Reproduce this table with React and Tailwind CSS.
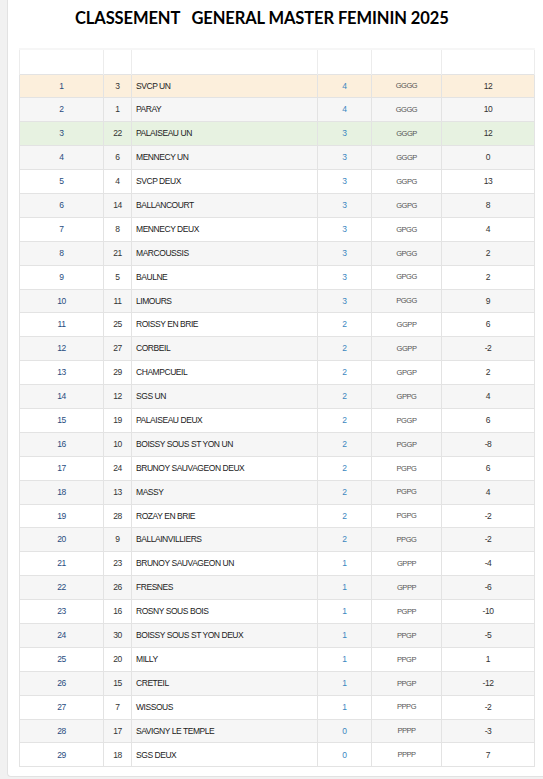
import React from "react";

const rows = [
  [1, 3, "SVCP UN", 4, "GGGG", 12],
  [2, 1, "PARAY", 4, "GGGG", 10],
  [3, 22, "PALAISEAU UN", 3, "GGGP", 12],
  [4, 6, "MENNECY UN", 3, "GGGP", 0],
  [5, 4, "SVCP DEUX", 3, "GGPG", 13],
  [6, 14, "BALLANCOURT", 3, "GGPG", 8],
  [7, 8, "MENNECY DEUX", 3, "GPGG", 4],
  [8, 21, "MARCOUSSIS", 3, "GPGG", 2],
  [9, 5, "BAULNE", 3, "GPGG", 2],
  [10, 11, "LIMOURS", 3, "PGGG", 9],
  [11, 25, "ROISSY EN BRIE", 2, "GGPP", 6],
  [12, 27, "CORBEIL", 2, "GGPP", -2],
  [13, 29, "CHAMPCUEIL", 2, "GPGP", 2],
  [14, 12, "SGS UN", 2, "GPPG", 4],
  [15, 19, "PALAISEAU DEUX", 2, "PGGP", 6],
  [16, 10, "BOISSY SOUS ST YON UN", 2, "PGGP", -8],
  [17, 24, "BRUNOY SAUVAGEON DEUX", 2, "PGPG", 6],
  [18, 13, "MASSY", 2, "PGPG", 4],
  [19, 28, "ROZAY EN BRIE", 2, "PGPG", -2],
  [20, 9, "BALLAINVILLIERS", 2, "PPGG", -2],
  [21, 23, "BRUNOY SAUVAGEON UN", 1, "GPPP", -4],
  [22, 26, "FRESNES", 1, "GPPP", -6],
  [23, 16, "ROSNY SOUS BOIS", 1, "PGPP", -10],
  [24, 30, "BOISSY SOUS ST YON DEUX", 1, "PPGP", -5],
  [25, 20, "MILLY", 1, "PPGP", 1],
  [26, 15, "CRETEIL", 1, "PPGP", -12],
  [27, 7, "WISSOUS", 1, "PPPG", -2],
  [28, 17, "SAVIGNY LE TEMPLE", 0, "PPPP", -3],
  [29, 18, "SGS DEUX", 0, "PPPP", 7],
];

const rowBg = (i) => {
  if (i === 0) return "bg-[#fcefdc]";
  if (i === 2) return "bg-[#e7f2e1]";
  return i % 2 === 1 ? "bg-[#f6f6f6]" : "bg-white";
};

export default function App() {
  return (
    <div className="w-[543px] h-[779px] overflow-hidden bg-[#f1f1f1] font-['Liberation_Sans',Arial,sans-serif]">
      <div className="ml-[7px] h-[777px] w-[560px] bg-white border-l border-b border-[#e2e2e2] rounded-bl">
        {/* Title */}
        <div className="h-[48px] pl-[67px] pt-[6px]">
          <h1 className="whitespace-pre font-['Lato',sans-serif] font-bold text-[16.5px] leading-[24px] text-black tracking-[-0.1px]">
            CLASSEMENT   GENERAL MASTER FEMININ 2025
          </h1>
        </div>

        {/* Table */}
        <table className="ml-[11px] w-[515px] table-fixed border-collapse border-t-2 border-[#f6f6f6] text-[8.5px] tracking-[-0.45px]">
          <colgroup>
            <col className="w-[84px]" />
            <col className="w-[28px]" />
            <col className="w-[186px]" />
            <col className="w-[54px]" />
            <col className="w-[70px]" />
            <col className="w-[93px]" />
          </colgroup>
          <thead>
            <tr className="h-[25px]">
              <th className="border-l border-r border-[#ececec]"></th>
              <th className="border-r border-[#ececec]"></th>
              <th className="border-r border-[#ececec]"></th>
              <th className="border-r border-[#ececec]"></th>
              <th className="border-r border-[#ececec]"></th>
              <th className="border-r border-[#ececec]"></th>
            </tr>
          </thead>
          <tbody>
            {rows.map((r, i) => (
              <tr key={r[0]} className={`h-[23.9px] ${rowBg(i)}`}>
                <td className="border border-[#e3e3e3] text-center text-[#284c7e]">{r[0]}</td>
                <td className="border border-[#e3e3e3] text-center text-[#333]">{r[1]}</td>
                <td className="border border-[#e3e3e3] pl-[4px] text-left text-[#222]">{r[2]}</td>
                <td className="border border-[#e3e3e3] text-center text-[#3b87bf]">{r[3]}</td>
                <td className="border border-[#e3e3e3] text-center text-[#555] text-[7.5px]">{r[4]}</td>
                <td className="border border-[#e3e3e3] text-center text-[#333]">{r[5]}</td>
              </tr>
            ))}
          </tbody>
        </table>
      </div>
    </div>
  );
}
